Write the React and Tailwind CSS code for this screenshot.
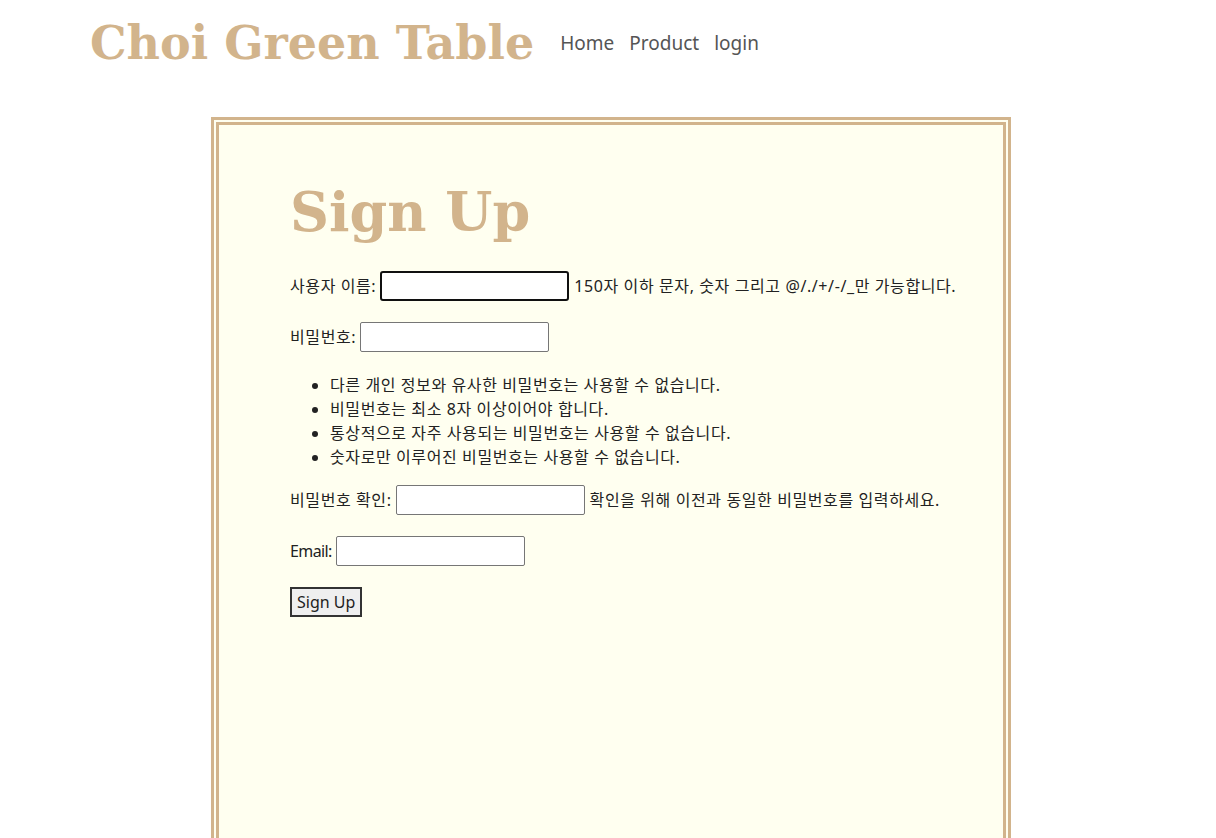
import { useState } from 'react';

const TAN = 'text-[#d2b48c]';

function Field({ label, id, type = 'text', help, focused, labelClass = '' }) {
  return (
    <p className="mb-[21px] flex items-center">
      <label htmlFor={id} className={`mr-[4px] ${labelClass}`}>{label}</label>
      <input
        id={id}
        type={type}
        className={`h-[30px] w-[189px] rounded-[2px] bg-white px-[2px] outline-none ${
          focused ? 'border-2 border-[#101010] rounded-[3px]' : 'border border-[#767676]'
        }`}
      />
      {help && <span className="ml-[5px]">{help}</span>}
    </p>
  );
}

export default function App() {
  const [rules] = useState([
    '다른 개인 정보와 유사한 비밀번호는 사용할 수 없습니다.',
    '비밀번호는 최소 8자 이상이어야 합니다.',
    '통상적으로 자주 사용되는 비밀번호는 사용할 수 없습니다.',
    '숫자로만 이루어진 비밀번호는 사용할 수 없습니다.',
  ]);

  return (
    <div className="min-h-[838px] bg-white font-['Noto_Sans','Noto_Sans_CJK_KR',sans-serif] text-[16px] tracking-[0.6px] text-[#222]">
      <header className="flex h-[86px] items-center pl-[90px]">
        <h1 className={`font-['DejaVu_Serif',serif] text-[46px] font-bold leading-none tracking-normal ${TAN}`}>
          Choi Green Table
        </h1>
        <nav className="ml-[26px] flex gap-[15px] text-[19px] tracking-normal text-[#555]">
          <a href="#">Home</a>
          <a href="#">Product</a>
          <a href="#">login</a>
        </nav>
      </header>

      <main className="ml-[211px] mt-[31px] h-[760px] w-[800px] border-[8px] border-double border-[#d2b48c] bg-[#fffff0] pl-[71px] pt-[60px]">
        <h2 className={`mb-[32px] font-['DejaVu_Serif',serif] text-[54px] font-bold leading-none tracking-normal ${TAN}`}>
          Sign Up
        </h2>
        <form>
          <Field
            id="username"
            label="사용자 이름:"
            focused
            help="150자 이하 문자, 숫자 그리고 @/./+/-/_만 가능합니다."
          />
          <Field id="password1" type="password" label="비밀번호:" />
          <ul className="mb-[16px] list-disc pl-[40px] leading-[24px]">
            {rules.map((r) => (
              <li key={r}>{r}</li>
            ))}
          </ul>
          <Field
            id="password2"
            type="password"
            label="비밀번호 확인:"
            help="확인을 위해 이전과 동일한 비밀번호를 입력하세요."
          />
          <Field id="email" type="email" label="Email:" labelClass="tracking-[-0.6px]" />
          <button
            type="submit"
            className="h-[30px] border-2 border-[#333] bg-[#efefef] px-[5px] tracking-normal"
          >
            Sign Up
          </button>
        </form>
      </main>
    </div>
  );
}
